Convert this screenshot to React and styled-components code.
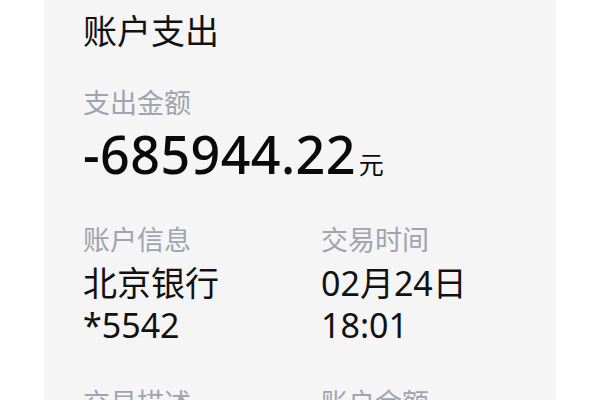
import React from "react";
import styled, { createGlobalStyle } from "styled-components";

const GlobalStyle = createGlobalStyle`
  html, body {
    margin: 0;
    padding: 0;
    background: #ffffff;
  }
  body {
    font-family: "Noto Sans", "Noto Sans CJK SC", sans-serif;
    color: #111111;
  }
`;

const Panel = styled.div`
  width: 512px;
  height: 400px;
  overflow: hidden;
  margin: 0 auto;
  background: #f5f5f5;
  padding: 7px 0 0 39px;
  box-sizing: border-box;
`;

const Title = styled.div`
  font-size: 34px;
  line-height: 48px;
  color: #111111;
`;

const Label = styled.div`
  font-size: 27px;
  line-height: 38px;
  color: #9fa4b0;
  margin-top: ${(p) => p.$gap || 0}px;
`;

const Amount = styled.div`
  font-size: 52px;
  font-weight: 500;
  line-height: 64px;
  color: #0a0a0a;
  letter-spacing: 0.4px;
`;

const Unit = styled.span`
  font-size: 25px;
  font-weight: 400;
  margin-left: 3px;
  letter-spacing: 0;
`;

const InfoGrid = styled.div`
  display: grid;
  grid-template-columns: 238px 1fr;
  row-gap: 38px;
  margin-top: 25px;
`;

const Field = styled.div`
  display: flex;
  flex-direction: column;
`;

const Value = styled.div`
  font-size: 34px;
  line-height: 42px;
  margin-top: 3px;
  color: #111111;
`;

const fields = [
  { label: "账户信息", lines: ["北京银行", "*5542"] },
  { label: "交易时间", lines: ["02月24日", "18:01"] },
  { label: "交易描述", lines: [] },
  { label: "账户余额", lines: [] },
];

export default function App() {
  return (
    <>
      <GlobalStyle />
      <Panel>
        <Title>账户支出</Title>
        <Label $gap={29}>支出金额</Label>
        <Amount>
          -685944.22<Unit>元</Unit>
        </Amount>
        <InfoGrid>
          {fields.map((f) => (
            <Field key={f.label}>
              <Label>{f.label}</Label>
              {f.lines.length > 0 && (
                <Value>
                  {f.lines.map((line) => (
                    <div key={line}>{line}</div>
                  ))}
                </Value>
              )}
            </Field>
          ))}
        </InfoGrid>
      </Panel>
    </>
  );
}
